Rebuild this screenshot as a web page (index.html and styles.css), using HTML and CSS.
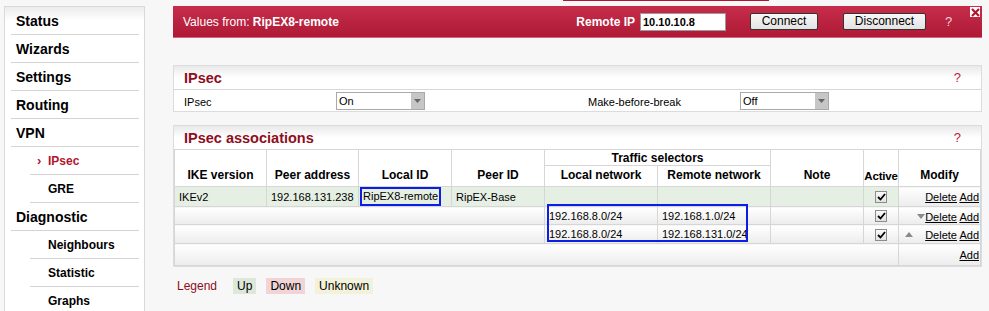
FILE: index.html
```html
<!DOCTYPE html>
<html lang="en">

<head>
    <meta charset="UTF-8">
    <title>IPsec</title>
    <link rel="stylesheet" href="styles.css">
</head>

<body>

    <div class="menu">
        <div class="menuItem">Status</div>
        <div class="menuItem">Wizards</div>
        <div class="menuItem">Settings</div>
        <div class="menuItem">Routing</div>
        <div class="menuItem">VPN</div>
        <div class="menuSub selected"><span class="chevron">&#8250;</span>IPsec</div>
        <div class="menuSub">GRE</div>
        <div class="menuItem">Diagnostic</div>
        <div class="menuSub">Neighbours</div>
        <div class="menuSub">Statistic</div>
        <div class="menuSub">Graphs</div>
    </div>

    <div class="main">
        <div class="tabLine"></div>

        <!-- barra remota -->
        <div class="remoteBar">
            <span class="valuesFrom">Values from: <b>RipEX8-remote</b></span>
            <span class="remoteLabel">Remote IP</span>
            <span class="remoteInput">10.10.10.8</span>
            <span class="btn btnConnect">Connect</span>
            <span class="btn btnDisconnect">Disconnect</span>
            <span class="barHelp">?</span>
            <span class="closeBox">
                <svg width="9" height="9" viewBox="0 0 9 9">
                    <path d="M1 1 L8 8 M8 1 L1 8" stroke="#b3142e" stroke-width="2.2" />
                </svg>
            </span>
        </div>

        <!-- IPsec -->
        <div class="panel panelIpsec">
            <div class="panelHead">
                <span class="panelTitle">IPsec</span>
                <span class="help">?</span>
            </div>
            <div class="formRow">
                <span class="formLabel">IPsec</span>
                <span class="select"><span>On</span><span class="selectArrow"></span></span>
                <span class="formLabel">Make-before-break</span>
                <span class="select"><span>Off</span><span class="selectArrow"></span></span>
            </div>
        </div>

        <!-- IPsec associations -->
        <div class="panel panelAssoc">
            <div class="panelHead">
                <span class="panelTitle">IPsec associations</span>
                <span class="help">?</span>
            </div>
            <table class="assoc">
                <colgroup>
                    <col style="width: 92px">
                    <col style="width: 92px">
                    <col style="width: 93px">
                    <col style="width: 93px">
                    <col style="width: 113px">
                    <col style="width: 113px">
                    <col style="width: 93px">
                    <col style="width: 35px">
                    <col>
                </colgroup>
                <tr class="headTop">
                    <th rowspan="2">IKE version</th>
                    <th rowspan="2">Peer address</th>
                    <th rowspan="2">Local ID</th>
                    <th rowspan="2">Peer ID</th>
                    <th colspan="2" class="tsHead">Traffic selectors</th>
                    <th rowspan="2">Note</th>
                    <th rowspan="2" class="activeHead">Active</th>
                    <th rowspan="2">Modify</th>
                </tr>
                <tr class="headBottom">
                    <th>Local network</th>
                    <th>Remote network</th>
                </tr>
                <tr class="rowUp">
                    <td>IKEv2</td>
                    <td>192.168.131.238</td>
                    <td class="idCell"><span class="mark">RipEX8-remote</span></td>
                    <td>RipEX-Base</td>
                    <td></td>
                    <td></td>
                    <td></td>
                    <td class="center"><span class="check"><svg width="9" height="8" viewBox="0 0 9 8"><path d="M1 4 L3.5 6.5 L8 1" fill="none" stroke="#000" stroke-width="1.8" /></svg></span></td>
                    <td class="modify"><span class="arrowSlot"></span><span class="arrowSlot"></span><a href="#">Delete</a> <a href="#">Add</a></td>
                </tr>
                <tr class="rowSel">
                    <td colspan="4"></td>
                    <td>192.168.8.0/24</td>
                    <td>192.168.1.0/24</td>
                    <td></td>
                    <td class="center"><span class="check"><svg width="9" height="8" viewBox="0 0 9 8"><path d="M1 4 L3.5 6.5 L8 1" fill="none" stroke="#000" stroke-width="1.8" /></svg></span></td>
                    <td class="modify"><span class="arrowSlot"></span><span class="arrowSlot"><svg width="8" height="5" viewBox="0 0 8 5"><path d="M0 0 H8 L4 5 Z" fill="#8a8a8a" /></svg></span><a href="#">Delete</a> <a href="#">Add</a></td>
                </tr>
                <tr class="rowSel rowSelLast">
                    <td colspan="4"></td>
                    <td>192.168.8.0/24</td>
                    <td>192.168.131.0/24</td>
                    <td></td>
                    <td class="center"><span class="check"><svg width="9" height="8" viewBox="0 0 9 8"><path d="M1 4 L3.5 6.5 L8 1" fill="none" stroke="#000" stroke-width="1.8" /></svg></span></td>
                    <td class="modify"><span class="arrowSlot"><svg width="8" height="5" viewBox="0 0 8 5"><path d="M0 5 H8 L4 0 Z" fill="#8a8a8a" /></svg></span><span class="arrowSlot"></span><a href="#">Delete</a> <a href="#">Add</a></td>
                </tr>
                <tr class="rowAdd">
                    <td colspan="8"></td>
                    <td class="modify"><a href="#">Add</a></td>
                </tr>
            </table>
            <div class="selMark"></div>
        </div>

        <div class="legend">
            <span class="legendTitle">Legend</span>
            <span class="legUp">Up</span>
            <span class="legDown">Down</span>
            <span class="legUnknown">Unknown</span>
        </div>
    </div>

</body>

</html>
```

FILE: styles.css
```css
body {
    margin: 0;
    background-color: #f7f7f7;
    font-family: 'Liberation Sans', Arial, sans-serif;
    color: #000;
    display: flex;
    align-items: flex-start;
    height: 311px;
    overflow: hidden;
}

/* Menu lateral */
.menu {
    width: 141px;
    margin: 6px 0 0 4px;
    padding: 0 5px 40px 6px;
    box-sizing: border-box;
    border: 1px solid #d9d9d9;
    background: linear-gradient(#ececec, #ffffff 14px);
}

.menuItem,
.menuSub {
    height: 27px;
    line-height: 28px;
    border-bottom: 1px solid #d4d4d4;
    font-weight: bold;
}

.menuItem {
    font-size: 14px;
    padding-left: 5px;
}

.menuSub {
    font-size: 12px;
    margin-left: 19px;
    padding-left: 18px;
}

.menuSub.selected {
    color: #b3142e;
    padding-left: 7px;
}

.chevron {
    display: inline-block;
    width: 11px;
    font-size: 13px;
}

/* Contenido */
.main {
    width: 809px;
    margin-left: 28px;
    position: relative;
}

.tabLine {
    height: 1px;
    width: 206px;
    margin-left: 390px;
    background-color: #b3142e;
}

.remoteBar {
    position: relative;
    margin-top: 5px;
    height: 31px;
    border-bottom: 1px solid #d8677b;
    background: linear-gradient(#c72d4a, #ae1a36);
    color: #fff;
    font-size: 12px;
    display: flex;
    align-items: center;
    padding: 0 30px 0 10px;
}

.valuesFrom {
    flex: 1;
}

.remoteLabel {
    font-weight: bold;
    margin-right: 5px;
}

.remoteInput {
    width: 82px;
    height: 16px;
    line-height: 17px;
    padding-left: 2px;
    background-color: #fff;
    border: 1px solid #9a9a9a;
    color: #000;
    font-size: 11px;
    font-weight: bold;
    margin-right: 24px;
}

.btn {
    height: 15px;
    line-height: 15px;
    text-align: center;
    color: #000;
    background: linear-gradient(#f7f7f7, #e3e3e3);
    border: 1px solid #333;
    border-radius: 2px;
    font-size: 12px;
}

.btnConnect {
    width: 66px;
    margin-right: 25px;
}

.btnDisconnect {
    width: 81px;
    margin-right: 19px;
}

.barHelp {
    font-size: 13px;
    color: #f0d4d8;
    width: 7px;
}

.closeBox {
    position: absolute;
    top: 1px;
    right: 2px;
    width: 10px;
    height: 10px;
    background-color: #fff;
    display: flex;
    align-items: center;
    justify-content: center;
}

.panel {
    border: 1px solid #dcdcdc;
    background-color: #fff;
}

.panelIpsec {
    margin-top: 27px;
}

.panelAssoc {
    margin-top: 13px;
    position: relative;
}

.panelHead {
    height: 23px;
    display: flex;
    align-items: center;
    justify-content: space-between;
    padding: 0 20px 0 10px;
    background: linear-gradient(#e9e9e9, #ffffff 12px);
}

.panelTitle {
    font-size: 14.5px;
    font-weight: bold;
    color: #8e0e20;
}

.help {
    color: #c0203a;
    font-size: 13px;
}

.formRow {
    border-top: 1px solid #d8d8d8;
    height: 21px;
    display: grid;
    grid-template-columns: 152px 252px 152px 1fr;
    align-items: center;
    padding-left: 10px;
    font-size: 11px;
}

.formLabel {
    padding-top: 2px;
}

.select {
    width: 85px;
    height: 16px;
    border: 1px solid #a9a9a9;
    display: flex;
    justify-content: space-between;
    align-items: center;
    padding-left: 2px;
    font-size: 11px;
}

.selectArrow {
    width: 13px;
    height: 16px;
    background: #c6c6c6 url("data:image/svg+xml,%3Csvg xmlns='http://www.w3.org/2000/svg' width='7' height='4'%3E%3Cpath d='M0 0H7L3.5 4Z' fill='%23666'/%3E%3C/svg%3E") no-repeat center;
}

/* Tabla de asociaciones */
.assoc {
    width: 807px;
    table-layout: fixed;
    border-collapse: collapse;
    border: 1px solid #d4d4d4;
    font-size: 11px;
}

.assoc th,
.assoc td {
    border: 1px solid #d6d6d6;
    padding: 0 4px;
    white-space: nowrap;
    overflow: hidden;
}

.assoc th {
    font-size: 12px;
    font-weight: bold;
    background-color: #fff;
    vertical-align: bottom;
    padding-bottom: 4px;
}

.headTop th {
    height: 15px;
}

.headBottom th {
    height: 16px;
}

.assoc th.tsHead {
    vertical-align: middle;
    padding-bottom: 0;
}

.assoc th.activeHead {
    padding: 0 0 4px 0;
    font-size: 11.5px;
    letter-spacing: -0.2px;
    overflow: visible;
}

.rowUp td {
    height: 19px;
    background-color: #e6efe3;
}

.rowSel td {
    height: 17px;
    background: linear-gradient(#ffffff, #ececec);
}

.rowSelLast td {
    height: 18px;
}

.rowUp td:nth-child(9),
.rowSel td:nth-child(3) {
    background: linear-gradient(#ffffff, #ececec);
}

.rowAdd td {
    height: 21px;
    background: linear-gradient(#ffffff, #ececec);
}

.assoc td.idCell {
    padding: 0 0 0 1px;
}

.mark {
    display: inline-block;
    border: 2px solid #0a1ee6;
    padding: 0 1px;
    height: 15px;
    line-height: 15px;
}

.center {
    text-align: center;
}

.check {
    display: inline-flex;
    align-items: center;
    justify-content: center;
    width: 10px;
    height: 10px;
    border: 1px solid #8c8c8c;
    background: linear-gradient(#fafafa, #e2e2e2);
    vertical-align: middle;
}

.assoc td.modify {
    text-align: right;
    padding: 0 1px 0 0;
    font-size: 11px;
}

.modify a {
    color: #000;
}

.arrowSlot {
    display: inline-block;
    width: 12px;
    vertical-align: 2px;
}

.selMark {
    position: absolute;
    left: 373px;
    top: 78px;
    width: 197px;
    height: 34px;
    border: 2px solid #0a1ee6;
}

.legend {
    margin-top: 11px;
    padding-left: 4px;
    display: flex;
    align-items: center;
    font-size: 12px;
}

.legendTitle {
    color: #8e0e20;
    margin-right: 16px;
}

.legUp,
.legDown,
.legUnknown {
    height: 16px;
    line-height: 16px;
    padding: 0 4px;
    margin-right: 10px;
}

.legUp {
    background-color: #dde8da;
}

.legDown {
    background-color: #f1d4d6;
}

.legUnknown {
    background-color: #f2f2da;
}
```
